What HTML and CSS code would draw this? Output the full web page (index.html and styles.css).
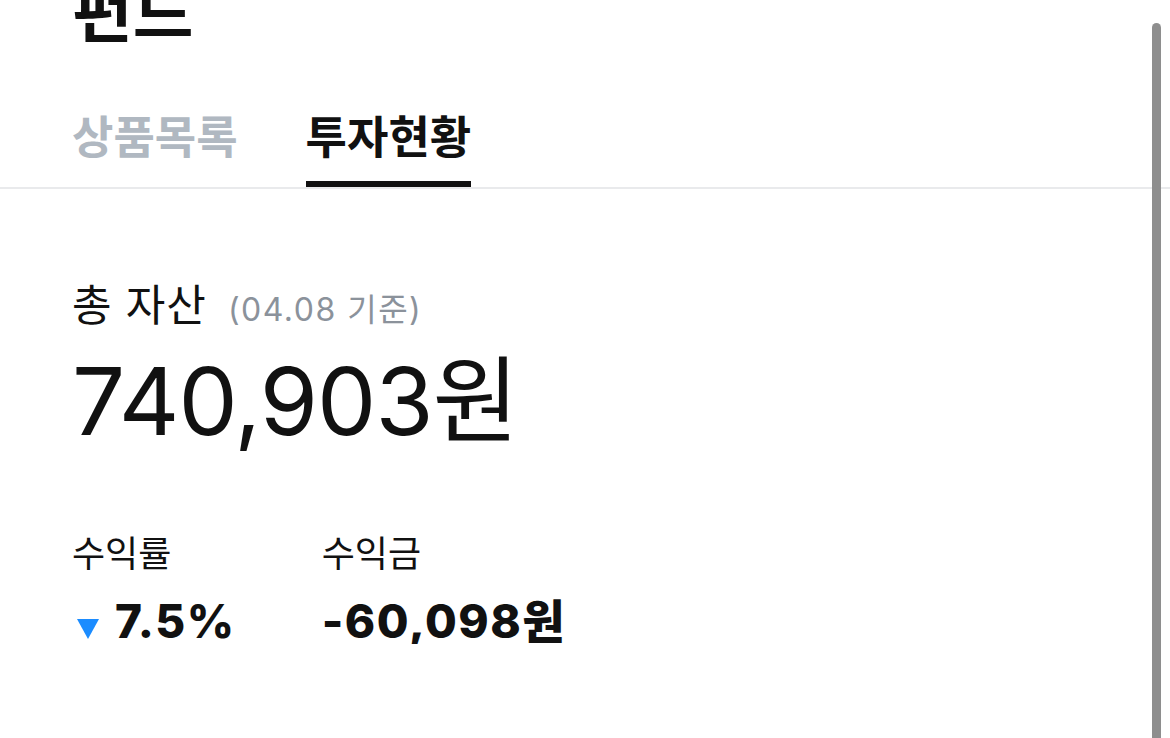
FILE: index.html
```html
<!DOCTYPE html>
<html lang="ko">
<head>
    <meta charset="UTF-8">
    <meta name="viewport" content="width=device-width, initial-scale=1.0">
    <title>펀드 - 투자현황</title>
    <link rel="stylesheet" href="styles.css">
</head>
<body>

    <div class="page">
        <h1 class="title">펀드</h1>

        <div class="tabs">
            <a class="tab" href="#">상품목록</a>
            <a class="tab active" href="#">투자현황</a>
        </div>

        <div class="summary">
            <div class="total-label">
                총 자산 <span class="date">(04.08 기준)</span>
            </div>
            <div class="total-value">740,903원</div>

            <div class="stats">
                <div class="stat">
                    <div class="stat-label">수익률</div>
                    <div class="stat-value">
                        <span class="down"></span>7.5%
                    </div>
                </div>
                <div class="stat">
                    <div class="stat-label">수익금</div>
                    <div class="stat-value">-60,098원</div>
                </div>
            </div>
        </div>
    </div>

    <div class="scrollbar"></div>

</body>
</html>
```

FILE: styles.css
```css
* {
    margin: 0;
    padding: 0;
    box-sizing: border-box;
}

body {
    font-family: Inter, 'Noto Sans CJK KR', sans-serif;
    background: #fff;
    color: #111;
    overflow: hidden;
}

.page {
    display: flex;
    flex-direction: column;
}

.title {
    font-size: 66px;
    font-weight: 700;
    line-height: 1;
    padding: 0 72px;
    margin-top: -20px;
}

.tabs {
    display: flex;
    gap: 68px;
    padding: 0 72px;
    margin-top: 69px;
    border-bottom: 2px solid #e9eaec;
}

.tab {
    font-size: 45px;
    font-weight: 600;
    line-height: 1;
    color: #b0b8c1;
    text-decoration: none;
    padding-bottom: 21px;
    border-bottom: 6px solid transparent;
}

.tab.active {
    color: #111;
    border-bottom-color: #111;
}

.summary {
    padding: 0 72px;
    display: flex;
    flex-direction: column;
}

.total-label {
    margin-top: 95px;
    font-size: 43px;
    line-height: 1;
    letter-spacing: 1px;
}

.date {
    font-size: 32px;
    letter-spacing: 1.5px;
    color: #8b929b;
    margin-left: 8px;
}

.total-value {
    margin-top: 27px;
    font-size: 94px;
    line-height: 1;
    letter-spacing: -1px;
}

.stats {
    display: flex;
    gap: 86px;
    margin-top: 88px;
}

.stat-label {
    font-size: 36px;
    line-height: 1;
}

.stat-value {
    margin-top: 26px;
    font-size: 46px;
    font-weight: 800;
    line-height: 1;
    letter-spacing: 1.5px;
    display: flex;
    align-items: center;
}

.down {
    width: 0;
    height: 0;
    border-left: 11px solid transparent;
    border-right: 11px solid transparent;
    border-top: 20px solid #1b8cff;
    margin: 16px 16px 0 5px;
}

.scrollbar {
    position: fixed;
    left: 1152px;
    top: 23px;
    width: 9px;
    height: 740px;
    border-radius: 5px;
    background: #8e8e8e;
}
```
